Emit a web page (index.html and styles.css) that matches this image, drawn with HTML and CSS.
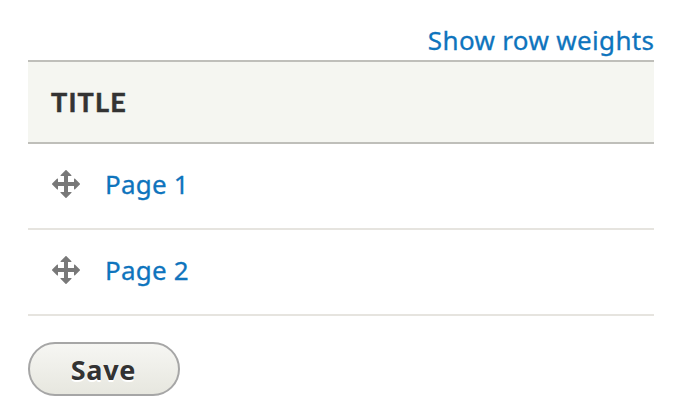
FILE: index.html
```html
<!DOCTYPE html>
<html lang="en">
<head>
<meta charset="utf-8">
<title>Pages</title>
<link rel="stylesheet" href="styles.css">
</head>
<body>
<div class="toggle"><a href="#">Show row weights</a></div>
<table class="pages">
<thead><tr><th>TITLE</th></tr></thead>
<tbody>
<tr><td><div class="cell"><svg class="handle" viewBox="1 1 14 14"><path d="M14.904 7.753l-2.373-2.372c-.291-.292-.529-.193-.529.22v1.399h-3v-3h1.398c.413 0 .512-.238.22-.529l-2.372-2.373c-.137-.136-.36-.136-.497 0l-2.372 2.372c-.292.292-.193.53.22.53h1.399v3h-3v-1.369c0-.413-.239-.511-.53-.22l-2.371 2.372c-.137.137-.137.36 0 .497l2.372 2.372c.292.292.53.193.53-.22v-1.43h3v3h-1.4c-.413 0-.511.238-.22.529l2.374 2.373c.137.137.36.137.495 0l2.373-2.373c.29-.291.19-.529-.222-.529h-1.398v-3h3v1.4c0 .412.238.511.529.219l2.373-2.371c.137-.137.137-.361 0-.497z"/></svg><a href="#">Page 1</a></div></td></tr>
<tr><td><div class="cell"><svg class="handle" viewBox="1 1 14 14"><path d="M14.904 7.753l-2.373-2.372c-.291-.292-.529-.193-.529.22v1.399h-3v-3h1.398c.413 0 .512-.238.22-.529l-2.372-2.373c-.137-.136-.36-.136-.497 0l-2.372 2.372c-.292.292-.193.53.22.53h1.399v3h-3v-1.369c0-.413-.239-.511-.53-.22l-2.371 2.372c-.137.137-.137.36 0 .497l2.372 2.372c.292.292.53.193.53-.22v-1.43h3v3h-1.4c-.413 0-.511.238-.22.529l2.374 2.373c.137.137.36.137.495 0l2.373-2.373c.29-.291.19-.529-.222-.529h-1.398v-3h3v1.4c0 .412.238.511.529.219l2.373-2.371c.137-.137.137-.361 0-.497z"/></svg><a href="#">Page 2</a></div></td></tr>
</tbody>
</table>
<button class="save" type="button">Save</button>
</body>
</html>
```
FILE: styles.css
```css
* { box-sizing: border-box; }
body { margin: 0; padding: 20px 30px 0 28px; background: #fff; font: 26px/40px "Noto Sans", sans-serif; color: #333; }
a { color: #0e74bd; text-decoration: none; -webkit-text-stroke: 0.3px #0e74bd; }
.toggle { height: 40px; text-align: right; letter-spacing: 0.34px; margin-right: -0.4px; }
.pages { width: 100%; border-collapse: separate; border-spacing: 0; }
th { height: 84px; padding: 0 23px; text-align: left; background: #f5f6f1; border: solid #bfbfba; border-width: 2px 0; font-family: Lato, "Open Sans", sans-serif; font-weight: 700; font-size: 27px; letter-spacing: 1.2px; -webkit-text-stroke: 0.5px #333; }
td { height: 86px; padding: 0 24px 4px; border-bottom: 2px solid #e6e4df; }
.cell { display: flex; align-items: center; letter-spacing: 0.2px; }
.handle { width: 28px; height: 28px; margin-right: 25px; fill: #787878; }
.save { display: block; width: 152px; height: 54px; margin-top: 26px; padding: 1px 1px 0 0; border: 2px solid #a6a6a6; border-radius: 27px; background: linear-gradient(#f6f6f3, #e7e7df); font: 700 27px/40px "Noto Sans", sans-serif; letter-spacing: 0.7px; color: #333; text-shadow: 0 2px #fff; }
```
